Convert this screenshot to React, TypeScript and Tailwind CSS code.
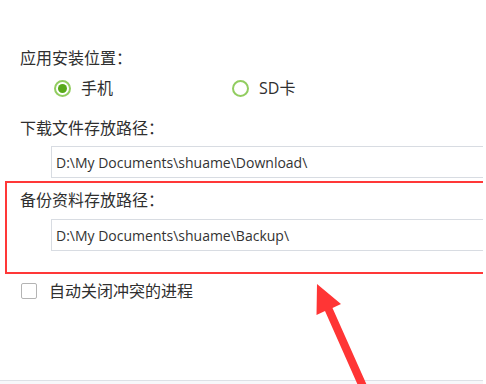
const FONT = { fontFamily: '"Open Sans", "Noto Sans CJK SC", sans-serif' };

const Radio = ({ checked, label }: { checked: boolean; label: string }) => (
    <div className="flex items-center gap-[10px]">
        <span className="flex h-[17px] w-[17px] items-center justify-center rounded-full border-2 border-[#92cd60] bg-white">
            {checked && <span className="h-[9px] w-[9px] rounded-full bg-[#58a91a]" />}
        </span>
        <span className="text-[16px] leading-[20px] text-[#2f2f2f]">{label}</span>
    </div>
);

const PathInput = ({ value }: { value: string }) => (
    <div className="ml-[51px] flex h-[32px] items-center border border-r-0 border-[#d8dce2] bg-white pl-[4px] text-[14px] text-[#333]">
        {value}
    </div>
);

const App = () => {
    return (
        <div className="relative h-[384px] w-[486px] overflow-hidden bg-white" style={FONT}>
            <div className="flex h-[384px] w-[483px] flex-col overflow-hidden">
                <div className="ml-[20px] mt-[48px] text-[16px] leading-[20px] text-[#2f2f2f]">应用安装位置：</div>
                <div className="mt-[10px] flex h-[20px] items-center pl-[54px]">
                    <div className="w-[178px]">
                        <Radio checked label="手机" />
                    </div>
                    <Radio checked={false} label="SD卡" />
                </div>

                <div className="ml-[20px] mt-[20px] text-[16px] leading-[20px] text-[#2f2f2f]">下载文件存放路径：</div>
                <div className="mt-[8px]">
                    <PathInput value="D:\My Documents\shuame\Download\" />
                </div>

                {/* highlighted block */}
                <div className="ml-[5px] mt-[3px] border-2 border-r-0 border-[#ff3838] pb-[21px] pt-[7px]">
                    <div className="ml-[13px] text-[16px] leading-[20px] text-[#2f2f2f]">备份资料存放路径：</div>
                    <div className="ml-[-7px] mt-[9px]">
                        <PathInput value="D:\My Documents\shuame\Backup\" />
                    </div>
                </div>

                <div className="ml-[21px] mt-[7px] flex items-center gap-[12px]">
                    <span className="h-[16px] w-[16px] rounded-[2px] border border-[#b4b4b4] bg-white" />
                    <span className="text-[16px] leading-[20px] text-[#2f2f2f]">自动关闭冲突的进程</span>
                </div>

                <div className="mt-auto h-[4px] border-t border-[#dde1e6] bg-[#f7f8fa]" />
            </div>

            {/* red arrow annotation */}
            <svg className="absolute left-0 top-0" width="486" height="384" viewBox="0 0 486 384">
                <polygon
                    points="317,284 341,304 332.5,308 369,390 360,390 325,311 316.5,315"
                    fill="#ff3535"
                />
            </svg>
        </div>
    );
};

export default App;
